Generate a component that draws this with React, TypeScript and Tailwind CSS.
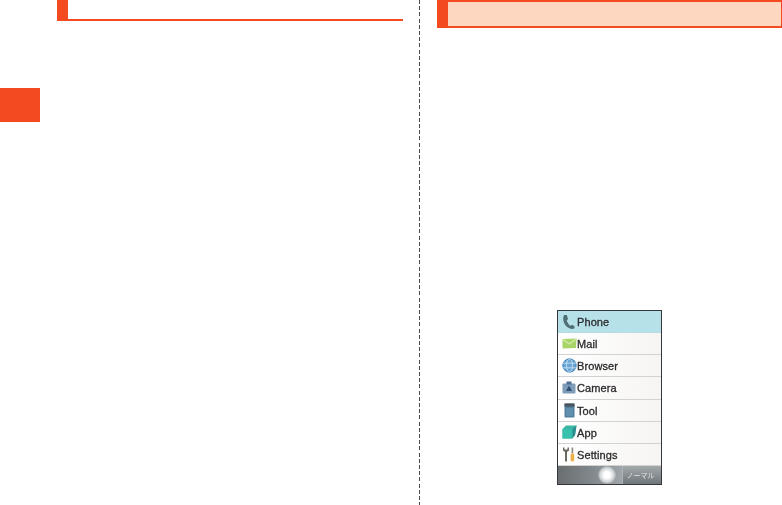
const font = { fontFamily: '"Liberation Sans", Arial, sans-serif' };

function PhoneIcon() {
  return (
    <svg width="14" height="16" viewBox="0 0 14 16">
      <path d="M2 1 C0.6 4 1 8 3.2 11 C5.4 13.8 8.5 15.4 12 14.8 L12.8 12.6 L10 10.8 L8.4 11.8 C6.8 10.8 5.2 8.4 4.8 6.4 L6 5 L4.8 1 Z" fill="#4f6f72" />
    </svg>
  );
}

function MailIcon() {
  return (
    <svg width="15" height="13" viewBox="0 0 15 13">
      <path d="M0.5 2 L14.5 1.5 L14 11 L0.5 11.5 Z" fill="#a8d468" />
      <path d="M0.5 2 L7.3 7 L14.5 1.5" fill="none" stroke="#d4eda8" strokeWidth="1.4" />
    </svg>
  );
}

function BrowserIcon() {
  return (
    <svg width="15" height="15" viewBox="0 0 15 15">
      <circle cx="7.5" cy="7.5" r="7" fill="#6ba6d6" />
      <circle cx="7.5" cy="7.5" r="6.6" fill="none" stroke="#3f7fb5" strokeWidth="0.8" />
      <ellipse cx="7.5" cy="7.5" rx="3" ry="6.5" fill="none" stroke="#cfe6f5" strokeWidth="0.8" />
      <path d="M1 5.2 H14 M1 9.8 H14" stroke="#cfe6f5" strokeWidth="0.8" />
    </svg>
  );
}

function CameraIcon() {
  return (
    <svg width="14" height="13" viewBox="0 0 14 13">
      <rect x="0.5" y="2.5" width="13" height="10" rx="1" fill="#7f9cb8" />
      <rect x="4.5" y="0.5" width="5" height="3" fill="#4f6f92" />
      <path d="M7 4.5 L10 10 H4 Z" fill="#2f4f78" />
    </svg>
  );
}

function ToolIcon() {
  return (
    <svg width="11" height="15" viewBox="0 0 11 15">
      <rect x="0.5" y="0.5" width="10" height="14" rx="1" fill="#4f7f9c" />
      <rect x="0.5" y="0.5" width="10" height="3" fill="#4a545c" />
      <rect x="2" y="5" width="7" height="8" fill="#5f90ad" />
    </svg>
  );
}

function AppIcon() {
  return (
    <svg width="15" height="14" viewBox="0 0 15 14">
      <path d="M0.5 4 L4 0.5 H14.5 L13 10 L10 13.5 H0.5 Z" fill="#3cb6a4" />
      <path d="M0.5 4 H10.5 V13.5 H0.5 Z" fill="#37c0ab" />
      <path d="M10.5 4 L14.5 0.5 L13 10 L10.5 13.5 Z" fill="#2b8d8f" />
    </svg>
  );
}

function SettingsIcon() {
  return (
    <svg width="14" height="15" viewBox="0 0 14 15">
      <path d="M1 0.5 V3.5 L3 5 V14.5 H5 V5 L7 3.5 V0.5 L5.5 0.5 V2.5 H2.5 V0.5 Z" fill="#6a6a60" />
      <rect x="9.6" y="0.5" width="1.6" height="6" fill="#8a8a80" />
      <rect x="8.6" y="6.5" width="3.6" height="8" rx="1.4" fill="#eeb04c" />
    </svg>
  );
}

const ROWS = [
  { label: "Phone", icon: <PhoneIcon />, active: true },
  { label: "Mail", icon: <MailIcon /> },
  { label: "Browser", icon: <BrowserIcon /> },
  { label: "Camera", icon: <CameraIcon /> },
  { label: "Tool", icon: <ToolIcon /> },
  { label: "App", icon: <AppIcon /> },
  { label: "Settings", icon: <SettingsIcon /> },
];

function PhoneScreen() {
  return (
    <div className="w-[105px] h-[175px] border border-[#33363a] flex flex-col bg-white overflow-hidden" style={font}>
      <div className="h-[155px] flex flex-col blur-[0.5px]">
        {ROWS.map((row) => (
          <div
            key={row.label}
            className={
              row.active
                ? "flex-1 flex items-center bg-[#b7e1e9] border-b border-[#b7dbe2]"
                : "flex-1 flex items-center bg-gradient-to-r from-[#ffffff] to-[#f6f5f3] border-b border-[#d2d2d2]"
            }
          >
            <div className="w-[19px] flex justify-center pl-[3px]">{row.icon}</div>
            <span className="text-[11px] leading-none pt-[2px] text-[#2c2a2c] tracking-[0.1px] [-webkit-text-stroke:0.3px_#2c2a2c]">{row.label}</span>
          </div>
        ))}
      </div>
      <div className="flex-1 flex bg-gradient-to-b from-[#a4a9ab] to-[#6f777b] blur-[0.6px]">
        <div className="w-[64px] flex items-center justify-end pr-[6px] bg-gradient-to-r from-[#6a6e70] via-[#80878a] to-[#a0a6a9]">
          <div className="w-[18px] h-[18px] rounded-full bg-[radial-gradient(circle,#ffffff_25%,#d0d4d6_55%,transparent_75%)]" />
        </div>
        <div className="flex-1 flex items-center justify-center border-l border-[#aeb3b5]">
          <span className="text-[7px] leading-none pr-[3px] text-[#dfe2e3]" style={{ fontFamily: '"Noto Sans CJK JP", sans-serif' }}>
            ノーマル
          </span>
        </div>
      </div>
    </div>
  );
}

export default function App() {
  return (
    <div className="w-[782px] h-[505px] bg-white flex overflow-hidden">
      {/* left page */}
      <div className="w-[57px] shrink-0 pt-[88px]">
        <div className="w-[40px] h-[34px] bg-[#f34a1f]" />
      </div>
      <div className="w-[346px] shrink-0">
        <div className="h-[21px] flex border-b-2 border-[#f34a1f]">
          <div className="w-[11px] bg-[#f34a1f]" />
        </div>
      </div>

      {/* fold line */}
      <div className="w-[1px] h-full ml-[16px] shrink-0 bg-[repeating-linear-gradient(to_bottom,#4a4a4a_0,#4a4a4a_4px,transparent_4px,transparent_6.2px)]" />

      {/* right page */}
      <div className="flex-1 ml-[17px] flex flex-col">
        <div className="h-[28px] flex bg-[#fdd7c0] border-t-2 border-b-2 border-r border-[#f34a1f]">
          <div className="w-[11px] bg-[#f34a1f]" />
        </div>
        <div className="mt-[282px] ml-[120px]">
          <PhoneScreen />
        </div>
      </div>
    </div>
  );
}
